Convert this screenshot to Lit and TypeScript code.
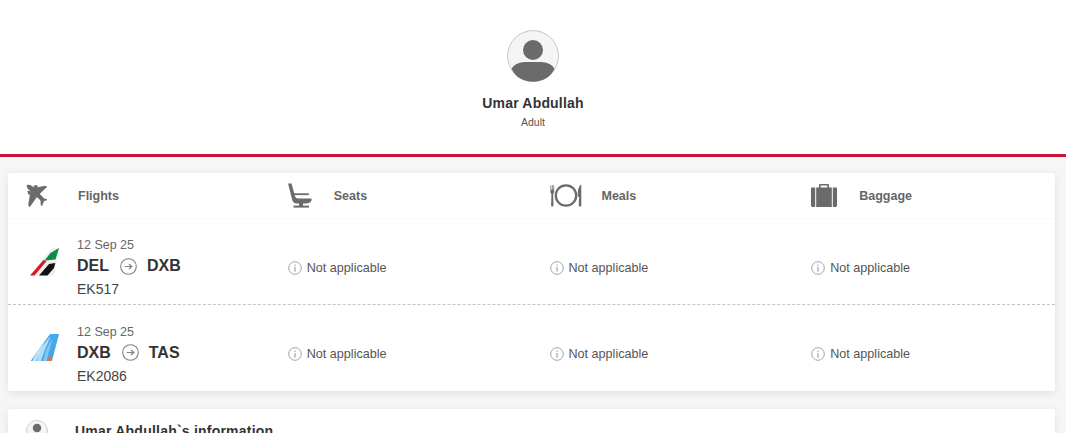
import { LitElement, html, css, svg } from "lit";
import { customElement } from "lit/decorators.js";

const planeIcon = html`<svg class="h-icon" width="24" height="26" viewBox="0 -1 24 26"><g fill="#6b6b6b">
  <path d="M0.800 1.200 C2.400 .200 5 .800 7 2.800 L18.600 15 L16 17.800 L3.600 6.600 C1.600 4.800 .200 2.600 .800 1.200 Z"/>
  <path d="M7 4 L19.500 1.800 L21.200 2.800 L12 11.500 L9 8 Z"/>
  <path d="M4.500 7 L2.200 21 L3.600 23.200 L11 13 L7.500 9.500 Z"/>
  <path d="M7.500 1.700 L10.800 1 L11.800 2 L10.500 4.500 L8.300 4.500 Z"/>
  <path d="M1.400 7 L2 10 L3.200 11 L5 8.800 L4.300 7 Z"/>
  <path d="M15 14.800 L20.600 14.800 L21 16.300 L18 17 L17 19.800 L16 22 L14.800 21.300 L14.500 17 Z"/>
</g></svg>`;
const seatIcon = html`<svg class="h-icon" width="24" height="26" viewBox="0 0 24 26"><g fill="#6b6b6b">
  <path d="M0 .5 L3.500 .5 L7 13 C7.300 14.500 8.500 15.500 10 15.500 L22.500 15.500 C24 15.500 24 17 23.200 18 C22 19.800 20 20.500 18 20.500 L9 20.500 C6 20.500 4.500 18.500 4 16 Z"/>
  <rect x="4.800" y="10.300" width="16" height="1.800"/>
  <rect x="11" y="20" width="4" height="3"/>
  <rect x="5.500" y="22.600" width="15.500" height="2"/>
</g></svg>`;
const mealIcon = html`<svg class="h-icon" width="32" height="26" viewBox="0 0 32 26"><g fill="#6b6b6b"><path d="M0.500 2 L1.100 2 L1.300 7 L1.800 7 L2 2 L2.600 2 L2.800 7 L3.300 7 L3.500 2 L4.100 2 L4.200 8.500 C4.200 10 3.500 10.500 3.200 11 L3.500 22.500 C3.500 23.800 1.100 23.800 1.100 22.500 L1.400 11 C.900 10.500 .400 10 .400 8.500 Z"/><path d="M31.300 1.500 L31.300 22.800 C31.300 23.800 28.800 23.800 28.800 22.800 L29.100 14 L27.900 13.600 C27.400 8 28.300 3.500 31.300 1.500 Z"/></g><circle cx="16" cy="12.500" r="10.200" fill="none" stroke="#6b6b6b" stroke-width="2.300"/></svg>`;
const bagIcon = html`<svg class="h-icon" width="26" height="24" viewBox="0 0 26 24"><g fill="#6b6b6b"><path d="M1.200 3.600 L4.200 3.600 L4.200 23 L1.200 23 C.400 23 0 22.400 0 21.800 L0 4.800 C0 4 .500 3.600 1.200 3.600 Z"/><path d="M5.200 3.600 L8 3.600 L8 1.400 C8 .500 8.600 0 9.400 0 L16.600 0 C17.400 0 18 .500 18 1.400 L18 3.600 L20.800 3.600 L20.800 23 L5.200 23 Z M9.600 3.600 L16.400 3.600 L16.400 1.600 L9.600 1.600 Z" fill-rule="evenodd"/><path d="M21.800 3.600 L24.800 3.600 C25.500 3.600 26 4 26 4.800 L26 21.800 C26 22.400 25.600 23 24.800 23 L21.800 23 Z"/></g></svg>`;
const infoIcon = html`<svg class="info" width="14" height="14" viewBox="0 0 14 14"><circle cx="7" cy="7" r="6.300" fill="none" stroke="#a3a3a3" stroke-width="1"/><rect x="6.400" y="6" width="1.200" height="4.600" fill="#a3a3a3"/><rect x="6.400" y="3.600" width="1.200" height="1.300" fill="#a3a3a3"/></svg>`;
const arrowIcon = html`<svg class="arrow" width="17" height="17" viewBox="0 0 17 17"><circle cx="8.500" cy="8.500" r="7.800" fill="none" stroke="#808080" stroke-width="1.100"/><path d="M4.800 8.500 H11.600 M9 6 L11.800 8.500 L9 11" fill="none" stroke="#808080" stroke-width="1.200"/></svg>`;
const emiratesTail = svg`
  <path d="M0 27.500 L21.500 0 L29 0 L24 27.500 Z" fill="#efefef"/>
  <path d="M0 27.500 L13.500 12 L16.700 13 L4.500 27.500 Z" fill="#d71a21"/>
  <path d="M29 0 L25.500 11.500 L14.500 12.500 L20.500 5 Z" fill="#0b8a4a"/>
  <path d="M9 27.500 L19 16 L25.300 15 L24 20 L17.500 27.500 Z" fill="#111"/>`;
const flydubaiTail = svg`
  <path d="M.7 27 L20 0 L29 0 L22 27 Z" fill="#45a8ea"/>
  <path d="M7 27 C8 19 14 9 20.500 2.500 C17 11 13 20 11 27 Z" fill="#b3dcf6"/>
  <path d="M2.500 27 C5 21 10 14 15 8.500 C11 16 8 22 6 27 Z" fill="#c6e5f9"/>
  <path d="M13.500 27 C14 20 18 11 22.500 4.500 C20 13 18 21 16.500 27 Z" fill="#85c5f0"/>
  <path d="M16.500 27 L21.800 21 L22 27 Z" fill="#f2702a"/>`;

const rows = [
  { tail: emiratesTail, date: "12 Sep 25", from: "DEL", to: "DXB", no: "EK517" },
  { tail: flydubaiTail, date: "12 Sep 25", from: "DXB", to: "TAS", no: "EK2086" },
];

@customElement("app-root")
export class AppRoot extends LitElement {
  static styles = css`
    :host { display: block; height: 433px; overflow: hidden; background: #f6f6f6; font-family: "Liberation Sans", Arial, sans-serif; color: #333; }
    .top { background: #fff; height: 154px; border-bottom: 3px solid #ce1138; display: flex; flex-direction: column; align-items: center; }
    .avatar { margin-top: 30px; width: 52px; height: 52px; }
    .name { margin-top: 13px; font-size: 14px; line-height: 16px; font-weight: 700; letter-spacing: .18px; color: #333; }
    .role { margin-top: 5px; font-size: 10.500px; line-height: 12px; color: #555; }
    .wrap { padding: 16px 11px 0 8px; display: flex; flex-direction: column; gap: 18px; }
    .card { background: #fff; border-radius: 3px; box-shadow: 0 2px 8px rgba(0,0,0,.09); }
    .grid { display: grid; grid-template-columns: repeat(4, 1fr); }
    .head { height: 46px; align-items: center; border-bottom: 1px solid #fafafa; box-sizing: border-box; }
    .hcell { display: flex; align-items: center; height: 46px; padding-left: 18px; font-size: 12.500px; font-weight: 700; color: #666; }
    .hcell span { margin-left: var(--gap); margin-top: -1px; }
    .h-icon { flex: none; }
    .row { height: 85px; align-items: center; }
    .row.first { border-bottom: 1px dashed #c4c4c4; }
    .row.last { height: 86px; }
    .fl { display: flex; align-items: center; padding-left: 22px; }
    .tail { flex: none; width: 31px; height: 28px; margin-right: 16px; }
    .txt { padding-top: 12px; }
    .date { font-size: 12.500px; line-height: 14px; color: #666; }
    .route { display: flex; align-items: center; font-size: 16px; font-weight: 700; line-height: 22px; color: #333; margin-top: 3px; }
    .arrow { margin: 0 10px 0 11px; }
    .code { font-size: 14px; line-height: 15px; color: #444; margin-top: 5px; }
    .na { display: flex; align-items: center; padding: 12px 0 0 18px; font-size: 12.600px; color: #555; gap: 5px; }
    .info { flex: none; }
    .person { height: 60px; display: flex; padding-left: 18px; gap: 27px; align-items: flex-start; }
    .mini { margin-top: 11px; flex: none; }
    .ptitle { margin-top: 14px; font-size: 14px; line-height: 16px; font-weight: 700; letter-spacing: .22px; color: #333; }
  `;

  render() {
    return html`
      <div class="top">
        <svg class="avatar" viewBox="0 0 52 52">
          <circle cx="26" cy="26" r="25.400" fill="#f5f5f5" stroke="#c6c6c6" stroke-width="1"/>
          <circle cx="26" cy="20" r="10" fill="#6b6b6b"/>
          <path d="M4.700 39 C6 35 12 32 18 32 L34 32 C40 32 46 35 47.300 39 C44 47 36 51.700 26 51.700 C16 51.700 8 47 4.700 39 Z" fill="#6b6b6b"/>
        </svg>
        <div class="name">Umar Abdullah</div>
        <div class="role">Adult</div>
      </div>
      <div class="wrap">
        <div class="card">
          <div class="grid head">
            <div class="hcell" style="--gap:28px">${planeIcon}<span>Flights</span></div>
            <div class="hcell" style="--gap:22px">${seatIcon}<span>Seats</span></div>
            <div class="hcell" style="--gap:20px">${mealIcon}<span>Meals</span></div>
            <div class="hcell" style="--gap:22px">${bagIcon}<span>Baggage</span></div>
          </div>
          ${rows.map((r, i) => html`
            <div class="grid row ${i === 0 ? "first" : "last"}">
              <div class="fl">
                <svg class="tail" viewBox="0 0 31 28">${r.tail}</svg>
                <div class="txt">
                  <div class="date">${r.date}</div>
                  <div class="route"><span>${r.from}</span>${arrowIcon}<span>${r.to}</span></div>
                  <div class="code">${r.no}</div>
                </div>
              </div>
              ${[0, 1, 2].map(() => html`<div class="na">${infoIcon}<span>Not applicable</span></div>`)}
            </div>`)}
        </div>
        <div class="card person">
          <svg class="mini" width="22" height="22" viewBox="0 0 52 52"><circle cx="26" cy="26" r="25" fill="#f5f5f5" stroke="#c9c9c9" stroke-width="2"/><circle cx="26" cy="19" r="10" fill="#6b6b6b"/></svg>
          <div class="ptitle">Umar Abdullah\`s information</div>
        </div>
      </div>
    `;
  }
}
